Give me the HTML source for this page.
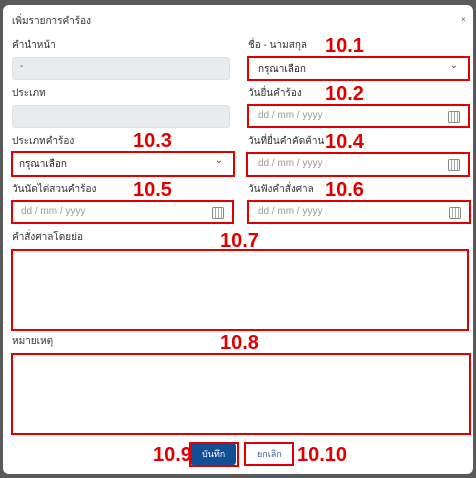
<!DOCTYPE html>
<html><head><meta charset="utf-8"><style>
*{box-sizing:border-box;margin:0;padding:0}
body{width:476px;height:478px;background:#5a5a5a;position:relative;overflow:hidden;font-family:"Liberation Sans","Noto Sans CJK SC",sans-serif;}
.m{position:absolute;left:3px;top:5px;width:470px;height:469px;background:#fff;border-radius:6px}
.a{position:absolute}
.lb{font-size:10px;color:#333}
.in{background:#e9ecef;border:1px solid #dee2e6;border-radius:3px}
.rb{border:2px solid #e00000}
.n{color:#e00000;font-weight:bold;font-size:20px}
.ph{font-size:10px;color:#999}
.tx{font-size:10px;color:#222}
.cal{position:absolute;right:8px;top:5px;width:12px;height:12px;border:1px solid #888;border-radius:2px;background:repeating-linear-gradient(90deg,#fff 0 2px,#aaa 2px 3px)}
.chev{position:absolute;right:10px;top:2px;font-size:10px;color:#444}
</style></head><body>
<div class="m"></div>
<div class="a" style="left:12px;top:14px;font-size:10px;color:#333">เพิ่มรายการคำร้อง</div>
<div class="a" style="left:461px;top:15px;font-size:8px;color:#555">×</div>

<div class="a lb" style="left:12px;top:38px">คำนำหน้า</div>
<div class="a in" style="left:12px;top:57px;width:218px;height:23px"></div>
<div class="a tx" style="left:20px;top:61px;color:#555">-</div>
<div class="a lb" style="left:12px;top:86px">ประเภท</div>
<div class="a in" style="left:12px;top:105px;width:218px;height:23px"></div>
<div class="a lb" style="left:12px;top:134px">ประเภทคำร้อง</div>
<div class="a rb" style="left:11px;top:151px;width:224px;height:26px"><span class="a tx" style="left:6px;top:4px">กรุณาเลือก</span><span class="chev">⌄</span></div>
<div class="a lb" style="left:12px;top:182px">วันนัดไต่สวนคำร้อง</div>
<div class="a rb" style="left:11px;top:200px;width:223px;height:24px"><span class="a ph" style="left:8px;top:4px">dd / mm / yyyy</span><span class="cal"></span></div>

<div class="a lb" style="left:248px;top:38px">ชื่อ - นามสกุล</div>
<div class="a rb" style="left:247px;top:56px;width:223px;height:25px"><span class="a tx" style="left:9px;top:4px">กรุณาเลือก</span><span class="chev">⌄</span></div>
<div class="a lb" style="left:248px;top:86px">วันยื่นคำร้อง</div>
<div class="a rb" style="left:247px;top:104px;width:223px;height:24px"><span class="a ph" style="left:9px;top:4px">dd / mm / yyyy</span><span class="cal"></span></div>
<div class="a lb" style="left:248px;top:134px">วันที่ยื่นคำคัดค้าน</div>
<div class="a rb" style="left:246px;top:152px;width:224px;height:25px"><span class="a ph" style="left:10px;top:4px">dd / mm / yyyy</span><span class="cal"></span></div>
<div class="a lb" style="left:248px;top:182px">วันฟังคำสั่งศาล</div>
<div class="a rb" style="left:247px;top:200px;width:224px;height:24px"><span class="a ph" style="left:9px;top:4px">dd / mm / yyyy</span><span class="cal"></span></div>

<div class="a lb" style="left:12px;top:230px">คำสั่งศาลโดยย่อ</div>
<div class="a rb" style="left:11px;top:249px;width:458px;height:82px"></div>
<div class="a lb" style="left:12px;top:334px">หมายเหตุ</div>
<div class="a rb" style="left:11px;top:353px;width:460px;height:82px"></div>

<div class="a n" style="left:325px;top:35px">10.1</div>
<div class="a n" style="left:325px;top:83px">10.2</div>
<div class="a n" style="left:133px;top:130px">10.3</div>
<div class="a n" style="left:325px;top:131px">10.4</div>
<div class="a n" style="left:133px;top:179px">10.5</div>
<div class="a n" style="left:325px;top:179px">10.6</div>
<div class="a n" style="left:220px;top:230px">10.7</div>
<div class="a n" style="left:220px;top:332px">10.8</div>

<div class="a" style="left:190px;top:443px;width:46px;height:22px;background:#124e96;border-radius:3px"></div>
<div class="a rb" style="left:189px;top:442px;width:50px;height:25px"></div>
<div class="a" style="left:202px;top:447px;font-size:9px;color:#fff">บันทึก</div>
<div class="a n" style="left:153px;top:444px">10.9</div>
<div class="a rb" style="left:244px;top:442px;width:50px;height:24px"></div>
<div class="a" style="left:257px;top:447px;font-size:9px;color:#3a5a9a">ยกเลิก</div>
<div class="a n" style="left:297px;top:444px">10.10</div>
</body></html>
